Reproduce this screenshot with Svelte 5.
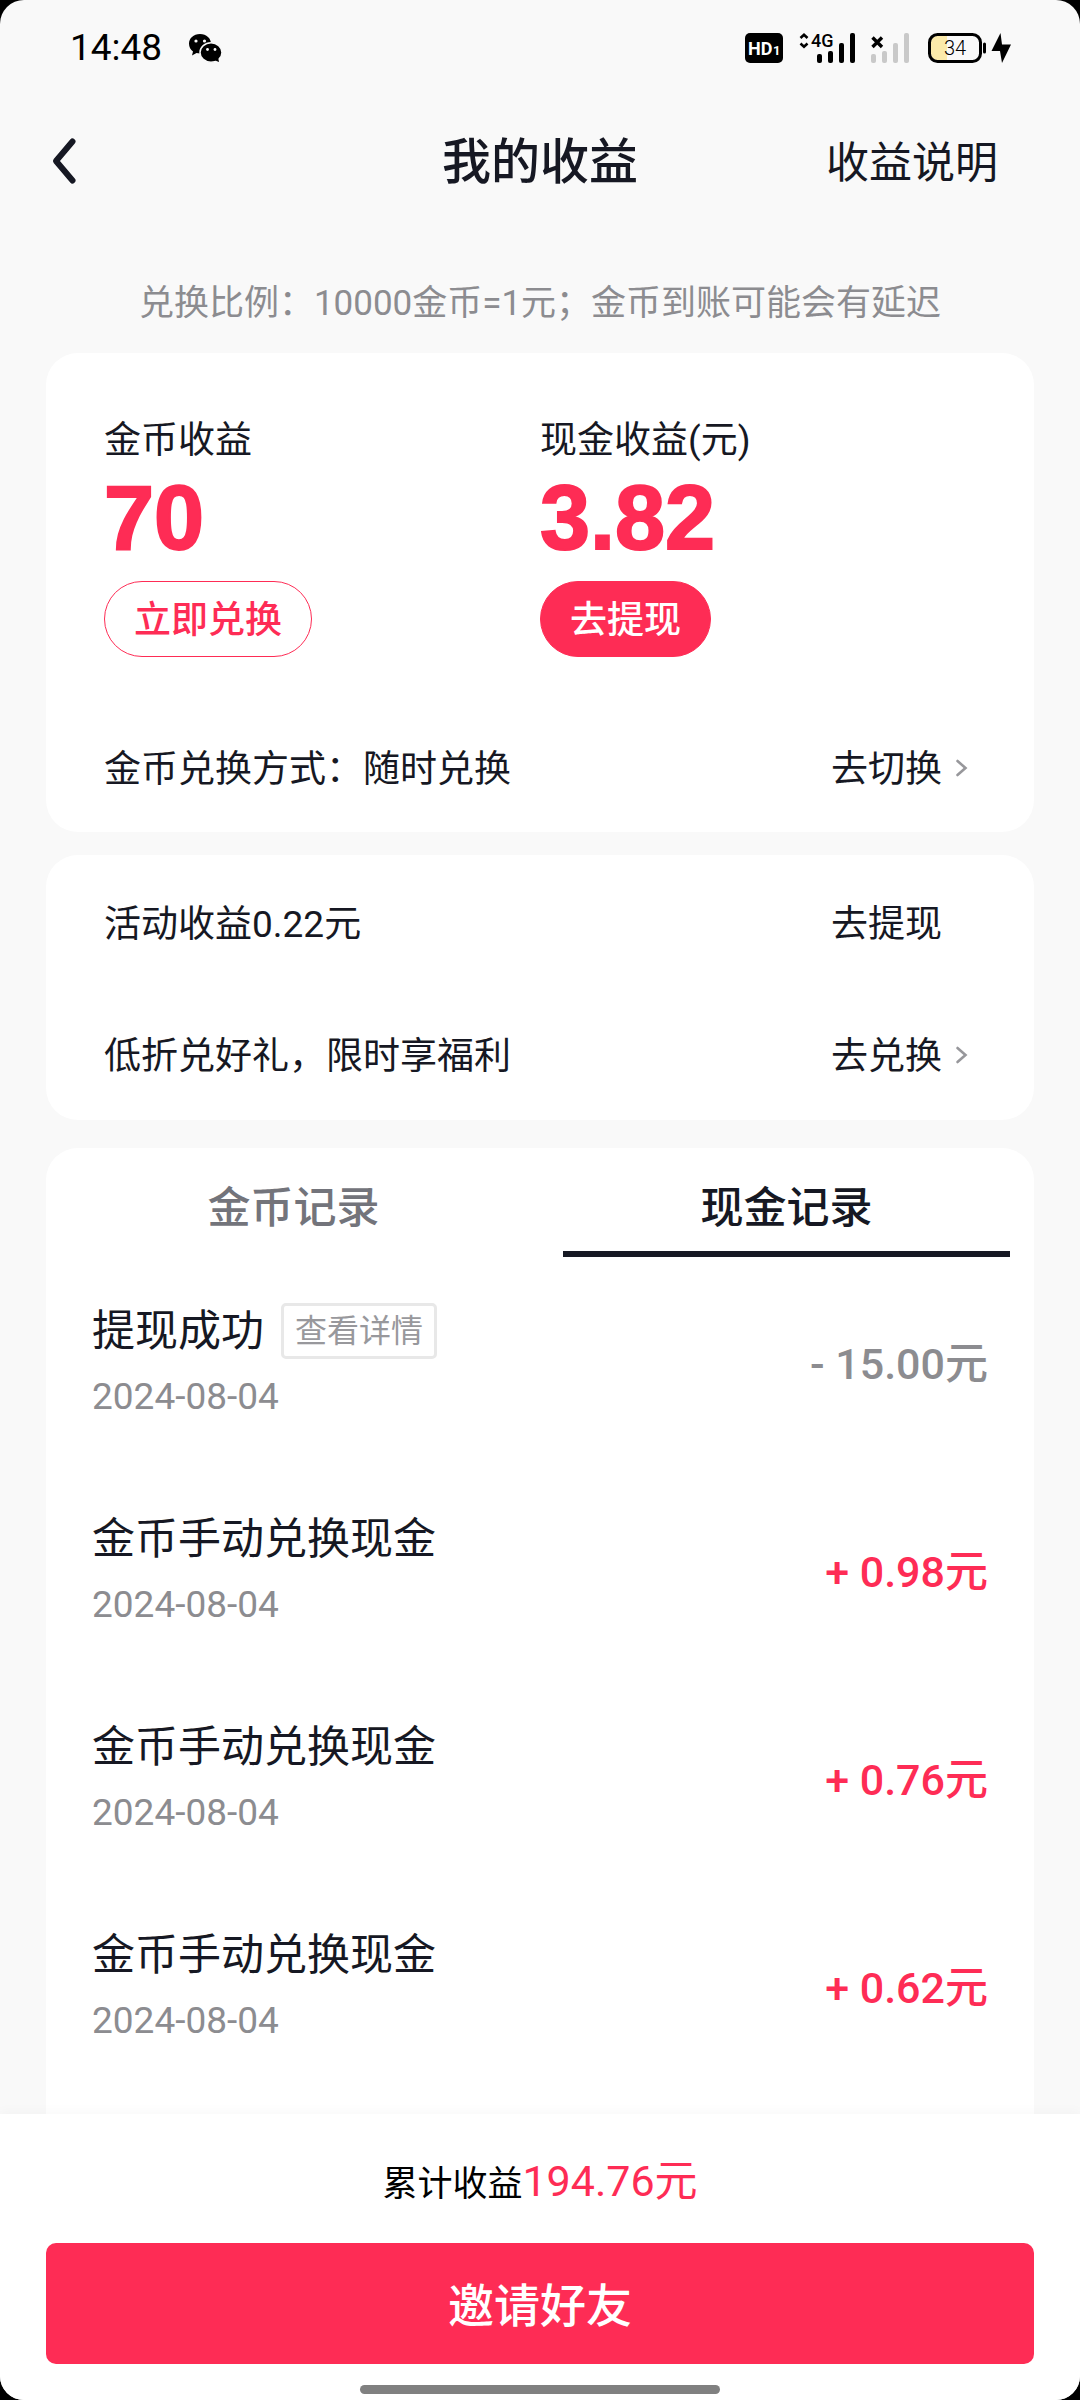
<script>
    let activeTab = "cash"

    const tabs = [
        { id: "coin", label: "金币记录" },
        { id: "cash", label: "现金记录" }
    ]

    const earnings = [
        { label: "金币收益", value: "70", action: "立即兑换", filled: false },
        { label: "现金收益(元)", value: "3.82", action: "去提现", filled: true }
    ]

    const extras = [
        { text: "活动收益0.22元", action: "去提现", arrow: false },
        { text: "低折兑好礼，限时享福利", action: "去兑换", arrow: true }
    ]

    const records = [
        { title: "提现成功", date: "2024-08-04", amount: "- 15.00元", detail: true },
        { title: "金币手动兑换现金", date: "2024-08-04", amount: "+ 0.98元" },
        { title: "金币手动兑换现金", date: "2024-08-04", amount: "+ 0.76元" },
        { title: "金币手动兑换现金", date: "2024-08-04", amount: "+ 0.62元" }
    ]
</script>

{#snippet chevron()}
    <svg width="11" height="18" viewBox="0 0 11 18" aria-hidden="true">
        <path d="M1.500 2 L9.500 9 L1.500 16" fill="none" stroke="#97979b" stroke-width="2.600" stroke-linecap="round" />
    </svg>
{/snippet}

<div class="screen">
    <div class="status">
        <span class="time">14:48</span>
        <svg width="34" height="30" viewBox="0 0 34 30" aria-hidden="true">
            <path d="M12 1 C5.400 1 1 5.500 1 10.800 C1 14 2.600 16.700 5 18.500 L4 22.500 L8.500 20 L12 20.500 C18 20.500 23 16.500 23 10.800 C23 5.500 18.600 1 12 1 Z" />
            <ellipse cx="23" cy="19.500" rx="11" ry="9.800" stroke="#f9f9f9" stroke-width="1.500" />
            <path d="M26 27 L31 29 L30 24 Z" />
            <g fill="#f9f9f9">
                <circle cx="8" cy="8" r="1.600" />
                <circle cx="16.500" cy="8" r="1.600" />
                <circle cx="19.500" cy="16.500" r="1.400" />
                <circle cx="27" cy="16.500" r="1.400" />
            </g>
        </svg>

        <div class="indicators">
            <svg width="38" height="30" viewBox="0 0 38 30" aria-hidden="true">
                <rect width="38" height="30" rx="5" />
                <text x="3" y="22" font-size="18" font-weight="700" fill="#fff">HD</text>
                <text x="28" y="22" font-size="13" font-weight="700" fill="#fff">1</text>
            </svg>
            <svg class="mobile" width="56" height="30" viewBox="0 0 56 30" aria-hidden="true">
                <path d="M1.500 5 L5 1.800 L8.500 5 M1.500 10.500 L5 13.700 L8.500 10.500" fill="none" stroke="#000" stroke-width="2.600" />
                <text x="12" y="14" font-size="18" font-weight="500">4G</text>
                <rect x="18" y="21" width="5" height="9" rx="2" />
                <rect x="29" y="18" width="5" height="12" rx="2" />
                <rect x="40" y="10" width="5" height="20" rx="2" />
                <rect x="51" y="0" width="5" height="30" rx="2" />
            </svg>
            <svg class="mobile" width="39" height="30" viewBox="0 0 39 30" aria-hidden="true">
                <path d="M1.500 4.500 L11 14 M11 4.500 L1.500 14" stroke="#000" stroke-width="3.400" />
                <g fill="#c9c9c9">
                    <rect x="0" y="21" width="5" height="9" rx="2" />
                    <rect x="11" y="18" width="5" height="12" rx="2" />
                    <rect x="22" y="10" width="5" height="20" rx="2" />
                    <rect x="33" y="0" width="5" height="30" rx="2" />
                </g>
            </svg>
            <svg class="battery" width="83" height="30" viewBox="0 0 83 30" aria-hidden="true">
                <path d="M9 3 H19 V27 H9 Q3 27 3 20 V10 Q3 3 9 3 Z" fill="#fbeaaa" />
                <rect x="1.500" y="1.500" width="51" height="27" rx="8" fill="none" stroke="#000" stroke-width="3" />
                <path d="M56.500 11 V19" stroke="#000" stroke-width="3" stroke-linecap="round" />
                <text x="27" y="22" font-size="20" font-weight="300" text-anchor="middle">34</text>
                <path d="M72.500 0 L63.500 18 H72 L74 30 L83 11.500 H74 Z" />
            </svg>
        </div>
    </div>

    <header>
        <button class="back" aria-label="返回">
            <svg width="24" height="46" viewBox="0 0 24 46" aria-hidden="true">
                <path d="M20.500 3.500 L4 23 L20.500 42.500" fill="none" stroke="#161823" stroke-width="6" stroke-linecap="round" stroke-linejoin="round" />
            </svg>
        </button>
        <h1>我的收益</h1>
        <a href="#rules">收益说明</a>
    </header>

    <main>
        <p class="notice">兑换比例：10000金币=1元；金币到账可能会有延迟</p>

        <section class="card">
            <div class="earnings">
                {#each earnings as item}
                    <div>
                        <div class="label">{item.label}</div>
                        <div class="value">{item.value}</div>
                        <button class="pill" class:filled={item.filled}>{item.action}</button>
                    </div>
                {/each}
            </div>
            <div class="line">
                <span>金币兑换方式：随时兑换</span>
                <a href="#switch">去切换<span class="arrow">{@render chevron()}</span></a>
            </div>
        </section>

        <section class="card extras">
            {#each extras as item}
                <div class="line">
                    <span>{item.text}</span>
                    <a href="#go">{item.action}<span class="arrow">{#if item.arrow}{@render chevron()}{/if}</span></a>
                </div>
            {/each}
        </section>

        <section class="card history">
            <div class="tabs" role="tablist">
                {#each tabs as tab}
                    <button role="tab" class:active={activeTab === tab.id}
                    aria-selected={activeTab === tab.id} on:click={() => activeTab = tab.id}>{tab.label}</button>
                {/each}
            </div>
            <ul>
                {#each records as record}
                    <li>
                        <div>
                            <div class="title">
                                {record.title}
                                {#if record.detail}
                                    <button class="detail">查看详情</button>
                                {/if}
                            </div>
                            <div class="date">{record.date}</div>
                        </div>
                        <span class="amount" class:out={record.amount.startsWith("-")}>{record.amount}</span>
                    </li>
                {/each}
            </ul>
        </section>
    </main>

    <footer>
        <p>累计收益<span>194.76元</span></p>
        <button class="invite">邀请好友</button>
        <div class="home"></div>
    </footer>
</div>

<style>
    :global(body) {
        background: #000;
    }

    .screen {
        display: flex;
        flex-direction: column;
        min-height: 100vh;
        overflow: hidden;
        border-radius: 24px;
        background: #f9f9f9;
        color: #161823;
        font-family: Roboto, "Noto Sans CJK SC", sans-serif;
        font-size: 37px;
        line-height: 48px;
    }

    button {
        box-sizing: border-box;
        margin: 0;
        padding: 0;
        border: none;
        background: none;
        color: inherit;
        font: inherit;
        cursor: pointer;
    }

    a {
        color: inherit;
        text-decoration: none;
    }

    svg {
        display: block;
        flex: none;
        overflow: visible;
    }

    p, h1, ul {
        margin: 0;
        padding: 0;
    }

    .status {
        display: flex;
        align-items: center;
        gap: 26px;
        height: 96px;
        padding: 0 69px 0 70px;
        color: #000;
    }

    .time {
        font-size: 37px;
    }

    .indicators {
        display: flex;
        margin-left: auto;
    }

    .mobile {
        margin-left: 16px;
    }

    .battery {
        margin-left: 18px;
    }

    header {
        display: grid;
        grid-template-columns: 1fr auto 1fr;
        align-items: center;
        height: 130px;
        padding: 0 52px;
    }

    .back {
        justify-self: start;
    }

    h1 {
        padding-top: 4px;
        font-size: 49px;
        font-weight: 500;
    }

    header a {
        justify-self: end;
        margin-right: 30px;
        padding-top: 4px;
        font-size: 43px;
    }

    main {
        display: flex;
        flex: 1;
        flex-direction: column;
        padding: 0 46px;
    }

    .notice {
        padding: 54px 0 25px;
        color: #8c8c90;
        font-size: 35px;
        text-align: center;
    }

    .card {
        border-radius: 32px;
        background: #fff;
    }

    .earnings {
        display: grid;
        grid-template-columns: 1fr 1fr;
        padding: 64px 58px 47px;
    }

    .value {
        color: #fe2c55;
        font-family: "Liberation Sans", sans-serif;
        font-size: 90px;
        font-weight: 700;
        line-height: 106px;
        -webkit-text-stroke: 2px #fe2c55;
    }

    .pill {
        height: 76px;
        margin-top: 10px;
        padding: 4px 29px 0;
        border: 1px solid #fe2c55;
        border-radius: 38px;
        color: #fe2c55;
        font-weight: 500;
    }

    .filled {
        background: #fe2c55;
        color: #fff;
    }

    .line {
        display: flex;
        box-sizing: border-box;
        align-items: center;
        justify-content: space-between;
        height: 128px;
        padding: 4px 67px 0 58px;
    }

    .line a {
        display: flex;
        align-items: center;
    }

    .arrow {
        display: flex;
        justify-content: flex-end;
        width: 25px;
        padding-bottom: 4px;
    }

    .extras {
        margin: 23px 0 28px;
        padding-bottom: 1px;
    }

    .extras .line {
        height: 132px;
        padding-top: 8px;
    }

    .history {
        flex: 1;
        border-radius: 32px 32px 0 0;
    }

    .tabs {
        display: grid;
        grid-template-columns: 1fr 1fr;
        gap: 46px;
        padding: 0 24px;
    }

    .tabs button {
        height: 109px;
        padding-top: 16px;
        border-bottom: 6px solid transparent;
        color: #73747b;
        font-size: 43px;
        font-weight: 500;
    }

    .tabs .active {
        border-color: #161823;
        color: #161823;
    }

    ul {
        list-style: none;
    }

    li {
        display: flex;
        box-sizing: border-box;
        align-items: center;
        justify-content: space-between;
        height: 208px;
        padding: 6px 46px 0;
    }

    .title {
        display: flex;
        align-items: center;
        gap: 17px;
        height: 66px;
        font-size: 43px;
    }

    .detail {
        height: 56px;
        padding: 0 11px;
        border: 3px solid #e8e8e8;
        border-radius: 5px;
        color: #98989c;
        font-size: 32px;
    }

    .date {
        height: 66px;
        color: #8c8c90;
        line-height: 66px;
    }

    .amount {
        color: #fe2c55;
        font-size: 43px;
        font-weight: 500;
    }

    .out {
        color: #8c8c90;
    }

    footer {
        padding: 39px 46px 6px;
        background: #fff;
        box-shadow: 0 -2px 12px rgba(0, 0, 0, 0.03);
    }

    footer p {
        color: #000;
        font-size: 35px;
        line-height: 56px;
        text-align: center;
    }

    footer p span {
        color: #fe2c55;
        font-size: 43px;
    }

    .invite {
        display: block;
        width: 100%;
        height: 121px;
        margin: 30px 0 21px;
        padding-top: 4px;
        border-radius: 10px;
        background: #fe2c55;
        color: #fff;
        font-size: 46px;
        font-weight: 500;
    }

    .home {
        width: 360px;
        height: 9px;
        margin: 0 auto;
        border-radius: 5px;
        background: #808080;
    }
</style>
